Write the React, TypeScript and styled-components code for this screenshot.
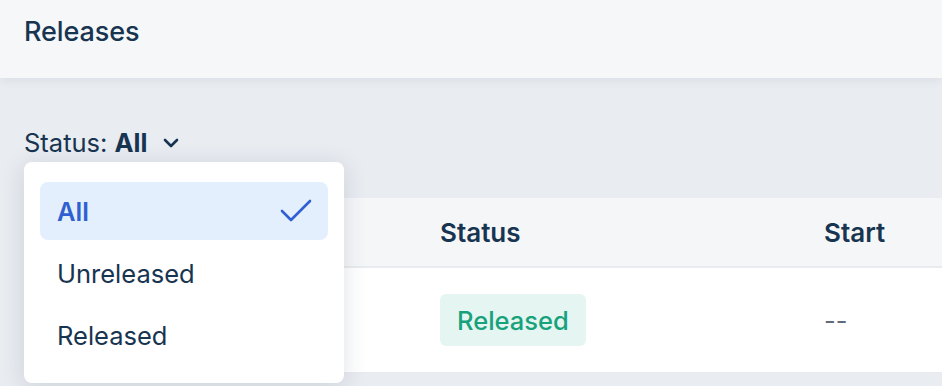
import styled, { createGlobalStyle } from "styled-components";

const GlobalStyle = createGlobalStyle`
  html, body {
    margin: 0;
    padding: 0;
    background: #e9ecf1;
    font-family: Inter, "Noto Sans", sans-serif;
    color: #173450;
    overflow: hidden;
  }
`;

const Page = styled.div`
  width: 942px;
  height: 386px;
  display: flex;
  flex-direction: column;
  background: #e9ecf1;
  position: relative;
`;

const Header = styled.header`
  height: 78px;
  box-sizing: border-box;
  flex-shrink: 0;
  display: flex;
  align-items: flex-start;
  padding: 15px 0 0 24px;
  background: #f5f7f9;
  box-shadow: 0 2px 10px rgba(30, 50, 80, 0.07);
  position: relative;
  z-index: 1;
`;

const Title = styled.h1`
  margin: 0;
  font-size: 27px;
  line-height: 34px;
  font-weight: 500;
  letter-spacing: -0.1px;
  color: #173450;
`;

const Content = styled.main`
  padding: 44px 0 0 24px;
  display: flex;
  flex-direction: column;
`;

const FilterWrap = styled.div`
  position: relative;
  height: 76px;
`;

const FilterButton = styled.button`
  border: 0;
  background: none;
  padding: 0;
  font: inherit;
  font-size: 25.5px;
  color: #173450;
  display: flex;
  align-items: center;
  gap: 16px;
  cursor: pointer;
  line-height: 42px;
`;

const FilterValue = styled.b`
  font-weight: 700;
`;

const Menu = styled.ul`
  position: absolute;
  top: 40px;
  left: 0;
  width: 320px;
  margin: 0;
  padding: 20px 16px 19px;
  list-style: none;
  background: #fff;
  border-radius: 8px;
  box-shadow: 0 4px 24px rgba(30, 50, 80, 0.14);
  z-index: 5;
  box-sizing: border-box;
  display: flex;
  flex-direction: column;
  gap: 4px;
`;

const MenuItem = styled.li<{ $active?: boolean }>`
  height: 58px;
  padding: 0 15px 0 17px;
  display: flex;
  align-items: center;
  justify-content: space-between;
  border-radius: 8px;
  font-size: 25.5px;
  font-weight: ${(p) => (p.$active ? 600 : 400)};
  color: ${(p) => (p.$active ? "#2f5fd0" : "#173450")};
  background: ${(p) => (p.$active ? "#e3effc" : "transparent")};
`;

const Table = styled.div`
  background: #fff;
  display: grid;
  grid-template-columns: 412px 384px 1fr;
`;

const HeadCell = styled.div`
  height: 68px;
  display: flex;
  align-items: center;
  padding-left: 4px;
  background: #f5f6f8;
  border-bottom: 2px solid #e8ebef;
  font-size: 26px;
  font-weight: 600;
  color: #173450;
`;

const Cell = styled.div`
  height: 104px;
  display: flex;
  align-items: center;
  padding-left: 4px;
  border-bottom: 2px solid #e8ebef;
  font-size: 25.5px;
  color: #5f6b7a;
`;

const Badge = styled.span`
  display: inline-flex;
  align-items: center;
  height: 52px;
  padding: 0 17px;
  border-radius: 6px;
  background: #e5f5f1;
  color: #17a27c;
  font-size: 25.5px;
  font-weight: 500;
`;

const Chevron = () => (
  <svg width="16" height="16" viewBox="0 0 16 16" fill="none">
    <path d="M2 5l6 6 6-6" stroke="#173450" strokeWidth="2.6" strokeLinecap="round" strokeLinejoin="round" />
  </svg>
);

const Check = () => (
  <svg width="34" height="26" viewBox="0 0 34 26" fill="none">
    <path d="M3 13l9 9L31 3" stroke="#2f5fd0" strokeWidth="2.6" strokeLinecap="round" strokeLinejoin="round" />
  </svg>
);

const options = ["All", "Unreleased", "Released"];

export default function App() {
  return (
    <Page>
      <GlobalStyle />
      <Header>
        <Title>Releases</Title>
      </Header>
      <Content>
        <FilterWrap>
          <FilterButton>
            <span>
              Status: <FilterValue>All</FilterValue>
            </span>
            <Chevron />
          </FilterButton>
          <Menu>
            {options.map((o) => (
              <MenuItem key={o} $active={o === "All"}>
                {o}
                {o === "All" && <Check />}
              </MenuItem>
            ))}
          </Menu>
        </FilterWrap>
        <Table>
          {/* first column sits under the open menu */}
          <HeadCell />
          <HeadCell>Status</HeadCell>
          <HeadCell>Start</HeadCell>
          <Cell />
          <Cell>
            <Badge>Released</Badge>
          </Cell>
          <Cell>--</Cell>
        </Table>
      </Content>
    </Page>
  );
}
